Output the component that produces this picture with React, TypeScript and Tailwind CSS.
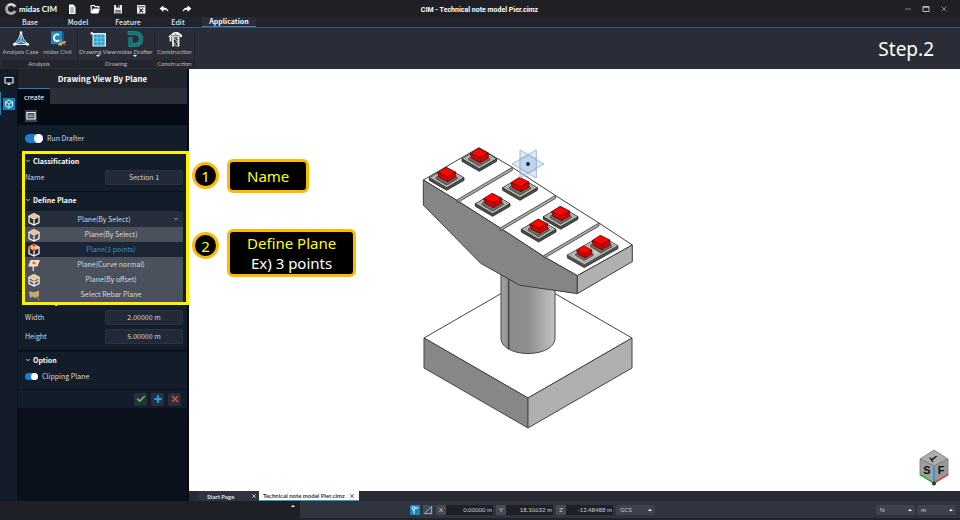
import { useState } from 'react';
import type { ReactNode } from 'react';
import { Check, ChevronDown, Minus, Plus, X } from 'lucide-react';

const MENUS = [
  { label: 'Base', width: 'w-12' },
  { label: 'Model', width: 'w-12' },
  { label: 'Feature', width: 'w-[52px]' },
  { label: 'Edit', width: 'w-12' },
  { label: 'Application', width: 'w-[54px]' },
];

const PLANE_TYPES = [
  'Plane(By Select)',
  'Plane(3 points)',
  'Plane(Curve normal)',
  'Plane(By offset)',
  'Select Rebar Plane',
];

function NewIcon() {
  return (
    <svg viewBox="0 0 12 12" className="size-3">
      <path d="M3 1.5h4.2L9.5 4v7H3z" fill="#fff" />
      <path d="M4.3 5h3.6M4.3 7h3.6M4.3 9h3.6" stroke="#444" strokeWidth=".8" />
    </svg>
  );
}

function OpenIcon() {
  return (
    <svg viewBox="0 0 12 12" className="size-3">
      <path d="M2.2 10V2.5h3l1 1.2h3.6V5" fill="none" stroke="#fff" strokeWidth="1.2" />
      <path d="M2 10.4 4 5.5h7L9.3 10.4z" fill="#fff" />
    </svg>
  );
}

function SaveIcon() {
  return (
    <svg viewBox="0 0 12 12" className="size-3">
      <path d="M2 2h8v8.5H2z" fill="#e8e8e8" />
      <path d="M4 2h4v2.6H4zM3.6 7h4.8v3.5H3.6z" fill="#1f2025" />
      <path d="M4.2 8h3.6M4.2 9.4h3.6M6.8 2.4v1.6" stroke="#fff" strokeWidth=".8" />
    </svg>
  );
}

function CloseFileIcon() {
  return (
    <svg viewBox="0 0 12 12" className="size-3">
      <path d="M2 2h8.4v8.6H2z" fill="#f0f0f0" />
      <path d="M2.8 3.8h6.8" stroke="#1f2025" strokeWidth=".9" />
      <path d="m4.3 5.6 3.8 3.8m0-3.8L4.3 9.4" stroke="#1f2025" strokeWidth="1.1" />
    </svg>
  );
}

function UndoIcon({ flip = false }: { flip?: boolean }) {
  return (
    <svg viewBox="0 0 12 12" className={flip ? 'size-3 -scale-x-100' : 'size-3'}>
      <path d="M5.4 2.4v2.1c3.2 0 4.8 1.5 5 4.6C9.300 7.400 8 6.800 5.400 6.800V9L1.600 5.600z" fill="#fff" />
    </svg>
  );
}

function AnalysisIcon() {
  return (
    <svg viewBox="0 0 18 18" className="size-[18px]">
      <path d="M9 2 6.500 9 2 14.500h14L11.500 9z" fill="#1c5f92" stroke="#d8e8f4" strokeWidth="1" />
      <path d="M9 2v9.500L2 14.500M9 11.500l7 3" fill="none" stroke="#fff" strokeWidth="1" />
      <path d="m5.500 10.500 3.500 1 3.500-1M7.500 6h3" fill="none" stroke="#59b3e6" strokeWidth="1.200" />
      <circle cx="2.500" cy="14.300" r="1.500" fill="#fff" />
      <circle cx="15.500" cy="14.300" r="1.500" fill="#fff" />
      <circle cx="9" cy="2.500" r="1.300" fill="#fff" />
    </svg>
  );
}

function CivilIcon() {
  return (
    <svg viewBox="0 0 18 18" className="size-[18px]">
      <path d="M2 1.500 13 1v13.500L2 14z" fill="#1d86c4" />
      <path d="m13 1 2 1.500V13l-2 1.500z" fill="#105583" />
      <path d="M10 5.300C8.700 3.700 5 4 5 7.700s3.700 4 5 2.300" fill="none" stroke="#fff" strokeWidth="1.800" />
      <path d="M12.500 9v7" stroke="#58b368" strokeWidth="1.300" />
      <path d="m9.500 15 7-3.500" stroke="#f0c94a" strokeWidth="1.500" />
      <path d="m10 11.500 6.500 3" stroke="#e7716b" strokeWidth="1.300" />
    </svg>
  );
}

function DrawingViewIcon() {
  return (
    <svg viewBox="0 0 18 18" className="size-[18px]">
      <path d="M1.500 4.500V3.500c0-2 2.500-2 2.500-.5h13v13.500H3.500v-12z" fill="#e9f3f8" />
      <path d="M4.700 4.500h11v11h-11z" fill="#2d9fd0" />
      <path d="M8.300 4.500v11M12 4.500v11M4.700 8h11M4.700 11.800h11" stroke="#8fd3ef" strokeWidth=".8" />
    </svg>
  );
}

function DrafterIcon() {
  return (
    <svg viewBox="0 0 18 18" className="size-[18px]">
      <path
        d="M1.500 3H8.500c4.500 0 6.500 2.500 6.500 6s-2 6-6.500 6H4.500V7"
        fill="none"
        stroke="#128a84"
        strokeWidth="4"
      />
      <path d="M1.500 3H8.500c4.500 0 6.500 2.500 6.500 6s-2 6-6.500 6H4.500V7" fill="none" stroke="#0b5a5c" strokeWidth=".8" />
    </svg>
  );
}

function ConstructionIcon() {
  return (
    <svg viewBox="0 0 18 18" className="size-[18px]">
      <path d="M2.500 6.500 8 2h4l4 3v2H2.500z" fill="#f2f2f2" />
      <path d="M5 5.800h9M8.500 3.500 11 5.500" stroke="#555b66" strokeWidth=".9" />
      <path d="M4.500 7v4.500M7 7v9.500M12.500 7v9.500" stroke="#f2f2f2" strokeWidth="1.800" />
      <path d="m7.500 8.500 4.500 3-4.500 3 4.500 2M7 8h5" fill="none" stroke="#c4c8cf" strokeWidth=".9" />
    </svg>
  );
}

// The small box used for every plane type, with a different face marked.
function PlaneIcon({ type }: { type: string }) {
  if (type === 'Plane(Curve normal)') {
    return (
      <svg viewBox="0 0 14 14" className="size-3.5">
        <path d="M3.500 2h9.500L10.500 8.500H1z" fill="#f4ddbf" />
        <circle cx="7" cy="5" r="1.600" fill="#e8622a" />
        <path d="M6.200 6.500V13" stroke="#f1f1f1" strokeWidth="1.200" />
      </svg>
    );
  }
  if (type === 'Select Rebar Plane') {
    return (
      <svg viewBox="0 0 14 14" className="size-3.5">
        <path d="M2 4c2-2 3.500 1 5.500 0L12 2.500v6L8 10l-2.500-1.500L3 10z" fill="#c9a677" />
        <path d="m9.500 8.500 3 3.500" stroke="#8d7453" strokeWidth="1.500" />
      </svg>
    );
  }
  return (
    <svg viewBox="0 0 14 14" className="size-3.5">
      <path d="M2 4.500v6L7 13l5-2.500v-6M7 7.500V13" fill="none" stroke="#f3f3f3" strokeWidth="1.300" />
      <path d="M7 1.300 12.700 4.300 7 7.300 1.300 4.300z" fill="#e8c592" stroke="#f6ead8" strokeWidth=".8" />
      {type === 'Plane(3 points)' && (
        <g fill="#e8552a">
          <circle cx="7" cy="2.300" r="1.600" />
          <circle cx="2.600" cy="4.800" r="1.600" />
          <circle cx="7.200" cy="7" r="1.600" />
        </g>
      )}
      {type === 'Plane(By offset)' && (
        <path d="M1.800 7 7 9.700 12.200 7" fill="none" stroke="#e9d2ae" strokeWidth="1.300" />
      )}
    </svg>
  );
}

function TitleBar() {
  return (
    <header className="flex h-[17px] items-center bg-[#1f2025] pr-3 pl-1 text-white">
      <svg viewBox="0 0 14 14" className="size-3.5">
        <circle cx="7" cy="7" r="4.500" fill="none" stroke="#a9abae" strokeWidth="3" />
        <path d="m9.500 5.500 5-1v5l-5-1z" fill="#1f2025" />
        <path d="M11 4A5 5 0 0 0 4 3.500" fill="none" stroke="#e8e8e8" strokeWidth="1.500" />
      </svg>
      <span className="w-[46px] pl-px font-['Lato','Noto_Sans',sans-serif] text-[8px]/3 font-bold whitespace-nowrap">
        midas CIM
      </span>
      <div className="flex gap-[11px] pl-0.5">
        <button type="button" aria-label="New"><NewIcon /></button>
        <button type="button" aria-label="Open"><OpenIcon /></button>
        <button type="button" aria-label="Save"><SaveIcon /></button>
        <button type="button" aria-label="Close file"><CloseFileIcon /></button>
        <button type="button" aria-label="Undo"><UndoIcon /></button>
        <button type="button" aria-label="Redo"><UndoIcon flip /></button>
      </div>
      <h1 className="flex-1 pt-0.5 pr-[138px] text-center font-['Roboto','Noto_Sans',sans-serif] text-[7px]/3 font-bold">
        CIM - Technical note model Pier.cimz
      </h1>
      <div className="flex gap-2.5 text-[#b9bbbf]">
        <button type="button" aria-label="Minimize"><Minus className="size-2" /></button>
        <button type="button" aria-label="Maximize">
          <svg viewBox="0 0 8 8" className="size-2">
            <path d="M1 1.500h6v5H1z" fill="none" stroke="currentColor" />
            <path d="M1 2h6" stroke="currentColor" strokeWidth="1.500" />
          </svg>
        </button>
        <button type="button" aria-label="Close"><X className="size-2" /></button>
      </div>
    </header>
  );
}

function MenuBar() {
  return (
    <nav className="flex h-[11px] items-stretch border-b border-[#34597d] bg-[#20232b] pl-1.5 text-[7px]/[9px] font-medium text-[#e3e5e8]">
      {MENUS.map((menu) => (
        <button
          key={menu.label}
          type="button"
          className={
            menu.label === 'Application'
              ? `${menu.width} border-b border-[#3b78b8] bg-[#2a2d37] font-bold text-white`
              : menu.width
          }
        >
          {menu.label}
        </button>
      ))}
    </nav>
  );
}

function RibbonButton({ icon, label, caret = false }: { icon: ReactNode; label: string; caret?: boolean }) {
  return (
    <button type="button" className="flex w-[37px] flex-col items-center whitespace-nowrap">
      {icon}
      <span className="text-[6px]/[7px]">{label}</span>
      {caret && <span className="border-x-2 border-t-2 border-x-transparent border-t-white" />}
    </button>
  );
}

function RibbonGroup({ title, children }: { title: string; children: ReactNode }) {
  return (
    <section className="flex flex-col justify-between border-r border-[#20232a] px-px">
      <div className="flex">{children}</div>
      <h2 className="bg-[#23252d] text-center text-[6px]/[8px]">{title}</h2>
    </section>
  );
}

function Ribbon() {
  return (
    <div className="flex h-[41px] bg-[#2a2d37] pt-0.5 pb-px text-[#b8bcc4]">
      <div className="flex pl-px font-['Lato','Noto_Sans',sans-serif]">
        <RibbonGroup title="Analysis">
          <RibbonButton icon={<AnalysisIcon />} label="Analysis Case" />
          <RibbonButton icon={<CivilIcon />} label="midas Civil" />
        </RibbonGroup>
        <RibbonGroup title="Drawing">
          <RibbonButton icon={<DrawingViewIcon />} label="Drawing View" caret />
          <RibbonButton icon={<DrafterIcon />} label="midas Drafter" caret />
        </RibbonGroup>
        <RibbonGroup title="Construction">
          <RibbonButton icon={<ConstructionIcon />} label="Construction" />
        </RibbonGroup>
      </div>
      <p className="ml-auto self-center pr-[26px] font-['Noto_Sans',sans-serif] text-[19px]/6 text-white">Step.2</p>
    </div>
  );
}

function Rail() {
  return (
    <aside className="flex w-[18px] flex-col border-r border-[#0b111a] bg-[#131c28] pt-0.5">
      <button type="button" aria-label="Display" className="flex h-[19px] items-center justify-center">
        <svg viewBox="0 0 10 10" className="size-2.5">
          <path d="M1 1.500h8v5.500H1zM5 7v2M3.500 8.500h3" fill="none" stroke="#e3e5e8" strokeWidth="1.200" />
        </svg>
      </button>
      <div className="mt-0.5 flex h-[23px] border-l border-[#1a86bd]">
        <button type="button" aria-label="Model" className="flex flex-1 items-center justify-center">
          <svg viewBox="0 0 12 12" className="size-3">
            <path d="M0 0h12v12H0z" fill="#1a80b5" />
            <path
              d="m6 2 3.500 2v4L6 10 2.500 8V4zM2.500 4 6 6l3.500-2M6 6v4"
              fill="none"
              stroke="#dff1fa"
              strokeWidth="1"
            />
          </svg>
        </button>
      </div>
    </aside>
  );
}

function Toggle({ id, label, size }: { id: string; label: string; size: 'sm' | 'md' }) {
  const shape =
    size === 'md'
      ? 'h-[9px] w-[18px] before:left-[9px] before:size-[9px]'
      : 'h-[7px] w-[13px] before:left-[6px] before:size-[7px]';
  return (
    <div className="flex items-center gap-1">
      <input
        id={id}
        type="checkbox"
        defaultChecked
        className={`relative appearance-none rounded-full bg-[#1a7fd0] before:absolute before:top-0 before:rounded-full before:bg-white ${shape}`}
      />
      <label htmlFor={id} className="text-[7px]/[9px]">
        {label}
      </label>
    </div>
  );
}

function SectionTitle({ children }: { children: ReactNode }) {
  return (
    <h3 className="flex h-3.5 items-center gap-0.5 text-[7px]/[9px] font-bold text-white">
      <ChevronDown className="size-1.5" strokeWidth={3} />
      {children}
    </h3>
  );
}

function Field({ id, label, value }: { id: string; label: string; value: string }) {
  return (
    <div className="flex h-[19px] items-center justify-between">
      <label htmlFor={id} className="text-[7px]/[9px]">
        {label}
      </label>
      <input
        id={id}
        defaultValue={value}
        className="h-[15px] w-[78px] rounded-xs border border-[#2b3342] bg-[#222938] pb-px text-center text-[7px]/[9px]"
      />
    </div>
  );
}

function PlaneSelect() {
  const [hovered, setHovered] = useState('Plane(3 points)');
  return (
    <div className="relative text-[7px]/[9px]">
      <div className="relative flex h-4 items-center rounded-t-xs bg-[#262d3b] pl-0.5">
        <PlaneIcon type="Plane(By Select)" />
        <select
          aria-label="Plane type"
          className="h-full flex-1 appearance-none pr-4 text-center"
          defaultValue="Plane(By Select)"
        >
          {PLANE_TYPES.map((type) => (
            <option key={type}>{type}</option>
          ))}
        </select>
        <ChevronDown className="pointer-events-none absolute right-1 size-1.5" strokeWidth={3} />
      </div>
      <ul className="absolute inset-x-0 top-full z-10 bg-[#4b515c]">
        {PLANE_TYPES.map((type) => (
          <li key={type}>
            <button
              type="button"
              onMouseEnter={() => setHovered(type)}
              className={`flex h-[15px] w-full items-center pr-0.5 pl-0.5 ${
                hovered === type ? 'bg-[#1d2433] text-[#2e93d8]' : ''
              }`}
            >
              <PlaneIcon type={type} />
              <span className="flex-1">{type}</span>
            </button>
          </li>
        ))}
      </ul>
    </div>
  );
}

function Panel() {
  return (
    <aside className="relative flex w-[171px] flex-col border-r-2 border-[#070c14] bg-[#0a111d] text-[#d5d9df]">
      <h2 className="bg-[#20242d] text-center text-[8px]/[19px] font-bold text-white">Drawing View By Plane</h2>
      <div className="flex h-4 bg-[#2b2f39]">
        <button type="button" className="w-8 border-t border-[#2f7cc0] bg-[#060b13] text-[7px]/[14px] text-white">
          create
        </button>
      </div>
      <div className="flex h-[21px] items-center bg-[#060b13] pt-0.5 pl-[7px]">
        <button type="button" aria-label="Create view" className="bg-[#3b444e]">
          <svg viewBox="0 0 12 12" className="size-3">
            <path d="M2 2.500h8v6.500H2z" fill="none" stroke="#f1f3f5" strokeWidth="1.200" />
            <path d="M3.500 5h5M3.500 6.600h5" stroke="#cfd3d8" strokeWidth=".8" />
          </svg>
        </button>
      </div>
      <div className="flex h-[27px] items-center bg-[#131d2a] pl-[7px]">
        <Toggle id="run-drafter" label="Run Drafter" size="md" />
      </div>
      <section className="mt-px h-[38px] bg-[#131d2a] pt-px pr-1 pl-[7px]">
        <SectionTitle>Classification</SectionTitle>
        <Field id="name" label="Name" value="Section 1" />
      </section>
      <section className="mt-px h-[99px] bg-[#131d2a] pt-px pr-1 pl-[7px]">
        <SectionTitle>Define Plane</SectionTitle>
        <div className="pt-1">
          <PlaneSelect />
        </div>
      </section>
      <section className="mt-px bg-[#131d2a] pt-0.5 pr-1 pb-1 pl-[7px]">
        <SectionTitle>Cutting Area</SectionTitle>
        <Field id="width" label="Width" value="2.00000 m" />
        <Field id="height" label="Height" value="5.00000 m" />
      </section>
      <section className="mt-0.5 h-[37px] bg-[#131d2a] pt-px pl-[7px]">
        <SectionTitle>Option</SectionTitle>
        <div className="pt-[5px]">
          <Toggle id="clipping" label="Clipping Plane" size="sm" />
        </div>
      </section>
      <div className="mt-px flex h-[18px] items-center justify-end gap-1 bg-[#131d2a] pr-1.5">
        <button type="button" aria-label="Apply" className="flex size-[13px] items-center justify-center rounded-xs bg-[#263042]">
          <Check className="size-2.5 text-[#5fc04c]" strokeWidth={4} />
        </button>
        <button type="button" aria-label="Add" className="flex size-[13px] items-center justify-center rounded-xs bg-[#263042]">
          <Plus className="size-2.5 text-[#1e9fe8]" strokeWidth={5} />
        </button>
        <button type="button" aria-label="Cancel" className="flex size-[13px] items-center justify-center rounded-xs bg-[#263042]">
          <X className="size-2.5 text-[#e0492f]" strokeWidth={4} />
        </button>
      </div>
      <div className="pointer-events-none absolute top-[82px] -right-0.5 left-1 z-20 h-[154px] border-3 border-[#fff200]" />
    </aside>
  );
}

// Bearings on the pier cap: centre of the base plate.
const BEARINGS = [
  [208, 90],
  [110, 147],
  [330, 177],
  [248, 225],
  [452, 264],
  [386, 302],
];

function RedBlock({ small = false }: { small?: boolean }) {
  return (
    <g transform={small ? 'scale(.85)' : undefined} stroke="#4a0606" strokeWidth="2" strokeLinejoin="round">
      <path d="M-32-5 0-24 32-5v4L0 18-32-1z" fill="#6b6b68" stroke="#333" />
      <path d="m-27-19 4 14L3 8l24-14v-14L3-7z" fill="#dc0000" />
      <path d="M-27-19-2-35l29 14L3-7z" fill="#ff0500" />
      <path d="M3-7V8" />
    </g>
  );
}

function Bearing({ x, y }: { x: number; y: number }) {
  return (
    <g transform={`translate(${x} ${y})`}>
      <path d="M-52-4v8L0 34 52 4v-8L0 26z" fill="#4f4f4d" stroke="#222" strokeWidth="2.500" />
      <path d="M-52-4 0-34 52-4 0 26z" fill="#c9c9c3" stroke="#222" strokeWidth="2.500" />
      <path d="M-42-4 0-28 42-4 0 20z" fill="none" stroke="#66665f" strokeWidth="2" strokeDasharray="4 2" />
      <RedBlock />
    </g>
  );
}

function PierModel() {
  return (
    <svg viewBox="189 69 771 422" className="absolute inset-0 size-full" aria-label="Pier model">
      <defs>
        <linearGradient id="column">
          <stop offset="0" stopColor="#a5a5a5" />
          <stop offset=".15" stopColor="#8b8b8b" />
          <stop offset=".5" stopColor="#8e8e8e" />
          <stop offset="1" stopColor="#c2c2c0" />
        </linearGradient>
      </defs>
      <g stroke="#444" strokeWidth="1" strokeLinejoin="round">
        <path d="m424 338 104-60 104 60-104 60z" fill="#fff" />
        <path d="m424 338 104 60v30l-104-60z" fill="#878787" />
        <path d="m632 338-104 60v30l104-60z" fill="#b0b0af" />
        <path d="M501 270v69c1 9 13 14.500 27 14.500S554 348 555 339v-69z" fill="url(#column)" />
        <path d="M508.700 275v74" strokeWidth="1.500" />
      </g>
      <g transform="translate(410 130) scale(.3333)" stroke="#3d3d3d" strokeWidth="3" strokeLinejoin="round">
        <path d="M40 150 207 53 307 112 437 197 567 279 667 345 502 437 402 380 272 295 142 212z" fill="#fff" />
        <path d="M40 150 142 212 272 295 402 380 502 437V491L330 466 212 400 40 225z" fill="#858585" />
        <path d="M502 437 667 345V395L502 491z" fill="#b0b0af" />
        <g fill="#a9a9a7" strokeWidth="2.500">
          <path d="m142 209 165-97v9l-165 97z" />
          <path d="m272 293 165-97v9l-165 97z" />
          <path d="m402 376 165-97v9l-165 97z" />
        </g>
        {BEARINGS.map(([x, y]) => (
          <Bearing key={`${x}-${y}`} x={x} y={y} />
        ))}
        <path d="M472 375v9l51 29 101-57v-9l-101 57z" fill="#4f4f4d" strokeWidth="2.500" />
        <path d="m472 375 101-57 51 29-101 57z" fill="#c9c9c3" strokeWidth="2.500" />
        <path d="m482 375 91-51 41 23-91 51z" fill="none" stroke="#66665f" strokeWidth="2" strokeDasharray="4 2" />
        <g transform="translate(573 351)"><RedBlock /></g>
        <g transform="translate(523 377)"><RedBlock small /></g>
        <g fill="#a9c6e8" fillOpacity=".35" stroke="#8fb0d6" strokeWidth="2.500">
          <path d="m330 60 49 27v57l-49-27z" />
          <path d="M379 60v57l-49 27V87z" />
          <path d="m306 102 48-27 48 27-48 27z" />
        </g>
        <circle cx="354" cy="102" r="6" fill="#1f2b3b" stroke="none" />
      </g>
    </svg>
  );
}

function ViewCube() {
  return (
    <svg viewBox="0 0 32 38" className="absolute right-[10px] bottom-1 h-[38px] w-8">
      <g stroke="#777" strokeWidth=".8" strokeLinejoin="round">
        <path d="M16 1 30 10 16 17 2 10z" fill="#adadad" />
        <path d="m2 10 14 7v17L2 26z" fill="#a0a0a0" />
        <path d="m30 10-14 7v17l14-8z" fill="#999" />
      </g>
      <path d="M16 17v17" stroke="#2b9bd8" strokeWidth="1.800" />
      <path d="m2 25.500 14 8.500" stroke="#34b33a" strokeWidth="1.800" />
      <path d="m30 25.500-14 8.500" stroke="#e04848" strokeWidth="1.800" />
      <circle cx="16" cy="34.500" r="2" fill="#24354a" />
      <g fontFamily="Liberation Sans" fontWeight="700" textAnchor="middle" fill="#0c0c0c">
        <text x="9" y="25" fontSize="11">S</text>
        <text x="23" y="25" fontSize="11">F</text>
        <text x="0" y="3" fontSize="10" transform="translate(16 9) rotate(-125)">T</text>
      </g>
    </svg>
  );
}

function Callout({ number, children }: { number: number; children: ReactNode }) {
  return (
    <div className="flex items-start gap-2">
      <span className="mt-[3px] flex size-[27px] items-center justify-center rounded-full border-3 border-[#ffb900] bg-black text-[15px]/5 text-[#ffff00]">
        {number}
      </span>
      <div className="flex min-h-[34px] flex-col justify-center rounded-md border-3 border-[#ffb900] bg-black px-[17px] py-px text-center text-[15px]/5 text-white">
        {children}
      </div>
    </div>
  );
}

function Viewport() {
  return (
    <main className="relative min-h-[422px] flex-1 overflow-hidden bg-white">
      <PierModel />
      <ViewCube />
      <div className="absolute top-[90px] left-[3px] flex flex-col gap-9 font-['Noto_Sans',sans-serif]">
        <Callout number={1}>
          <p className="text-[#ffff00]">Name</p>
        </Callout>
        <Callout number={2}>
          <p className="text-[#ffff00]">Define Plane</p>
          <p>Ex) 3 points</p>
        </Callout>
      </div>
    </main>
  );
}

function FileTabs() {
  return (
    <div className="flex h-2.5 bg-[#282b34] pl-2.5 font-['Lato','Noto_Sans',sans-serif] text-[6px]/[9px] font-bold">
      <div className="flex w-[60px] items-center justify-between bg-[#30343f] pr-0.5 pl-2 text-[#dfe2e6]">
        Start Page
        <button type="button" aria-label="Close Start Page"><X className="size-1.5" strokeWidth={3} /></button>
      </div>
      <div className="flex items-center gap-1 border-b border-[#2b9bc8] bg-white px-1 text-[#33373d]">
        Technical note model Pier.cimz
        <button type="button" aria-label="Close model"><X className="size-1.5" strokeWidth={3} /></button>
      </div>
    </div>
  );
}

function Coordinate({ axis, value }: { axis: string; value: string }) {
  return (
    <div className="flex">
      <label htmlFor={`axis-${axis}`} className="w-2.5 bg-[#454a55] text-center">
        {axis}
      </label>
      <input id={`axis-${axis}`} defaultValue={value} className="h-2.5 w-[47px] bg-[#1d2027] pr-px text-right" />
    </div>
  );
}

function StatusSelect({ label, value }: { label: string; value: string }) {
  return (
    <div className="relative flex items-center">
      <select
        aria-label={label}
        defaultValue={value}
        className="h-2.5 w-[39px] appearance-none rounded-xs bg-[#3d424e] pl-1"
      >
        <option>{value}</option>
      </select>
      <span className="pointer-events-none absolute right-[3px] border-x-2 border-b-2 border-x-transparent border-b-white" />
    </div>
  );
}

function StatusBar() {
  return (
    <footer className="flex h-[19px] border-b-2 border-[#20232a] bg-[#2f343f] font-['Lato','Noto_Sans',sans-serif] text-[6px]/[10px] text-[#ccd0d6]">
      <div className="flex w-[300px] justify-end bg-[#1f2025] pt-1 pr-[5px]">
        <span className="h-0.5 border-x-2 border-b-2 border-x-transparent border-b-white" />
      </div>
      <div className="flex flex-1 items-center gap-[3px] pr-1 pl-[110px]">
        <button type="button" aria-label="Snap">
          <svg viewBox="0 0 10 10" className="size-2.5">
            <path d="M0 0h10v10H0z" fill="#1a86bd" />
            <path d="M4 3.500V8.500M4 3h4.500" stroke="#fff" strokeWidth="1.100" />
            <circle cx="3.500" cy="3.200" r="1.500" fill="#1a86bd" stroke="#fff" />
          </svg>
        </button>
        <button type="button" aria-label="Work plane">
          <svg viewBox="0 0 10 10" className="size-2.5">
            <path d="M0 0h10v10H0z" fill="#404b59" />
            <path d="M8.500 1.500v7h-7z" fill="none" stroke="#93a4b5" />
          </svg>
        </button>
        <Coordinate axis="X" value="0.00000 m" />
        <Coordinate axis="Y" value="18.10632 m" />
        <Coordinate axis="Z" value="-12.48488 m" />
        <StatusSelect label="Coordinate system" value="GCS" />
        <div className="ml-auto flex gap-0.5">
          <StatusSelect label="Force unit" value="N" />
          <StatusSelect label="Length unit" value="m" />
        </div>
      </div>
    </footer>
  );
}

export default function App() {
  return (
    <div className="flex min-h-screen flex-col bg-[#1f2025] font-['Noto_Sans_CJK_KR','Noto_Sans',sans-serif]">
      <TitleBar />
      <MenuBar />
      <Ribbon />
      <div className="flex flex-1">
        <Rail />
        <Panel />
        <div className="flex min-w-0 flex-1 flex-col">
          <Viewport />
          <FileTabs />
        </div>
      </div>
      <StatusBar />
    </div>
  );
}
